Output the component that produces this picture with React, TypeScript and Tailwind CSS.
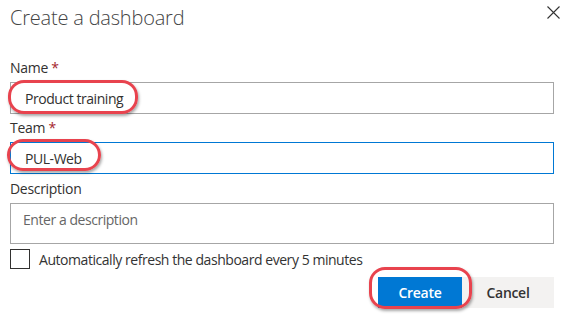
import React from "react";

const font = { fontFamily: '"Open Sans", "Noto Sans", sans-serif' };

function Highlight({ className }: { className: string }) {
  return (
    <div
      className={
        "pointer-events-none absolute rounded-[16px] border-[3px] border-[#e8434e] shadow-[1px_2px_3px_rgba(0,0,0,0.35)] " +
        className
      }
    />
  );
}

export default function App() {
  return (
    <div className="relative w-[565px] h-[319px] bg-white overflow-hidden text-[#323130]" style={font}>
      <div className="flex flex-col pl-[10px] pr-[11px]">
        <div className="flex items-start justify-between h-[56px]">
          <div className="pt-[4px] text-[20px] font-light text-[#444] leading-[28px] tracking-[-0.2px]">Create a dashboard</div>
          <svg width="13" height="13" viewBox="0 0 13 13" className="mt-[6px] mr-[-6px]">
            <path d="M0.5 0.5 L12.5 12.5 M12.5 0.5 L0.5 12.5" stroke="#333" strokeWidth="1.1" />
          </svg>
        </div>

        <label className="text-[14px] leading-[24px] h-[26px] tracking-[-0.3px]">
          Name <span className="text-[#a4262c]">*</span>
        </label>
        <div className="h-[32px] border border-[#a6a6a6] flex items-center pl-[14px] text-[14px] tracking-[-0.45px]">Product training</div>

        <label className="text-[14px] leading-[24px] h-[28px] pt-[2px] tracking-[-0.3px]">
          Team <span className="text-[#a4262c]">*</span>
        </label>
        <div className="h-[32px] border border-[#0078d4] flex items-center pl-[14px] text-[14px] tracking-[-0.45px]">PUL-Web</div>

        <label className="text-[14px] leading-[24px] h-[29px] pt-[3px] tracking-[-0.3px]">Description</label>
        <div className="h-[41px] border border-[#a6a6a6] flex items-start pt-[5px] pl-[12px] text-[14px] text-[#666] tracking-[-0.45px]">
          Enter a description
        </div>

        <div className="flex items-center mt-[5px] h-[20px]">
          <div className="w-[20px] h-[20px] border border-[#323130] bg-white" />
          <span className="ml-[9px] text-[14px] text-[#333] tracking-[-0.45px]">Automatically refresh the dashboard every 5 minutes</span>
        </div>

        <div className="flex justify-end mt-[8px]">
          <button className="h-[31px] w-[84px] bg-[#0078d4] text-white text-[14px] font-semibold tracking-[-0.3px]">Create</button>
          <button className="h-[31px] w-[92px] bg-[#f3f2f1] text-[#333] text-[14px] font-semibold tracking-[-0.3px]">Cancel</button>
        </div>
      </div>

      <Highlight className="left-[8px] top-[80px] w-[130px] h-[34px]" />
      <Highlight className="left-[7px] top-[139px] w-[94px] h-[32px]" />
      <Highlight className="left-[369px] top-[267px] w-[103px] h-[42px]" />
    </div>
  );
}
